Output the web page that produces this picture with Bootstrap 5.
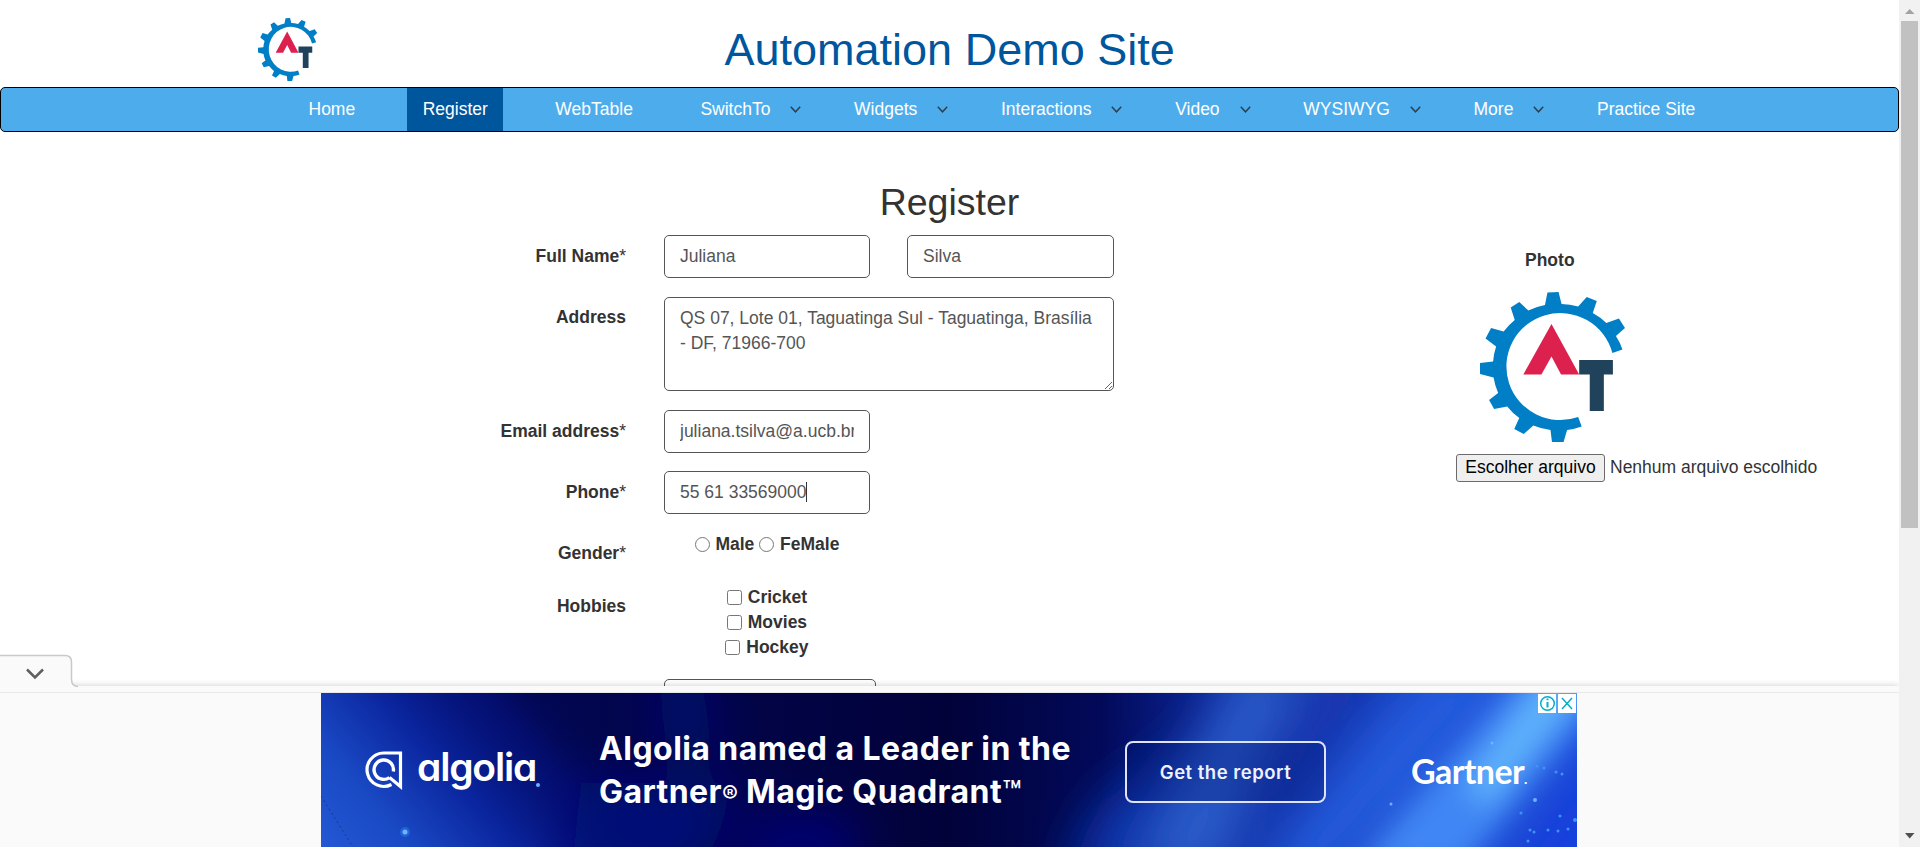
<!DOCTYPE html>
<html lang="en">
<head>
<meta charset="utf-8">
<title>Register</title>
<link rel="stylesheet" href="https://cdn.jsdelivr.net/npm/bootstrap@5.3.0/dist/css/bootstrap.min.css">
<style>
html, body { height: 100%; overflow: hidden; }
body { font: 17.5px/25px "Liberation Sans", Arial, sans-serif; color: #333; }
.page-view { height: 847px; position: relative; }
.page-body { width: 1899px; }
.site-head { height: 87px; padding-left: 257.500px; }
.site-head svg { width: 60px; height: 63px; margin-top: 18px; }
.site-title { font-size: 45px; line-height: 49px; color: #00569d; margin: 25px 0 0 407px; font-weight: 400; }
.main-nav { height: 45px; border: 1px solid #000; border-radius: 5px; background: #4dadec; padding: 0 0 0 292px; }
.main-nav .nav-link { height: 43px; padding: 9px 15.5px 8px; color: #fff; line-height: 25px; }
.main-nav .nav-link.active { background: #00569d; }
.main-nav .nav-item { margin-right: 36.5px; }
.main-nav .drop-item { margin-right: 37.2px; display: flex; }
.main-nav .drop-item .nav-link { padding-right: 0; }
.drop-item svg { width: 11px; height: 7px; margin: 18px 0 0 20px; }
.reg-title { font-size: 37.5px; line-height: 42px; margin: 48.5px 0 12px; font-weight: 400; text-align: center; }
.reg-form { width: 1114px; }
.form-line { display: flex; }
.form-line > label { width: 626px; text-align: right; font-weight: 700; padding-top: 9px; margin-right: 38px; flex: none; }
.form-line > .area-label { padding-top: 8px; }
.form-line .form-control { font-size: 17.5px; line-height: 25px; color: #555; border: 1px solid #555; border-radius: 5px; padding: 8px 15px; height: 43px; width: 206px; box-shadow: none; }
.form-line textarea.form-control { width: 450px; height: 94px; resize: both; }
.option-box { width: 206px; text-align: center; font-weight: 700; }
.option-box input { width: 15px; height: 15px; margin: 0; vertical-align: -2px; }
.option-box .choice-text { margin-left: 1px; }
.star { font-weight: 400; }
.photo-col { width: 443px; }
.file-btn { font-size: 17.5px; line-height: 24px; height: 28px; width: 149px; border: 1px solid #6b6b6b; border-radius: 3px; background: #efefef; color: #000; padding: 0 0 2px; }
.caret-line { left: 806px; top: 482px; width: 1px; height: 20px; background: #333; }
.scroll-rail { width: 21px; background: #f1f1f1; right: 0; top: 0; bottom: 0; }
.scroll-rail .thumb { width: 17px; height: 507px; background: #c1c1c1; margin: 0 0 0 2px; }
.ad-dock { left: 0; top: 686px; width: 1899px; height: 161px; background: #fafafa; box-shadow: 0 -1px 6px rgba(0,0,0,.16); }
.dock-strip { height: 7px; border-bottom: 1px solid #e9e9e9; position: relative; background: #fafafa; }
.dock-tab { left: 0; top: -32px; }
.ad-banner { width: 1256px; height: 154px; margin-left: 321px; background: #020a55; color: #fff; position: relative; overflow: hidden; }
.ad-banner .backdrop { left: 0; top: 0; }
.ad-text { font-family: Inter, "Open Sans", sans-serif; }
.wordmark { font-size: 39px; line-height: 40px; font-weight: 600; letter-spacing: -1.2px; font-feature-settings: "cv11"; }
.ad-headline { font-size: 32px; line-height: 43px; font-weight: 700; letter-spacing: .43px; }
.ad-headline small { font-weight: 500; letter-spacing: 0; line-height: 1; }
.ad-headline .reg-sign { font-size: 24px; }
.ad-headline .tm-sign { font-size: 31px; }
.ad-cta { width: 201px; height: 62px; border: 2px solid #dfe4fb; border-radius: 8px; font-size: 18.5px; font-weight: 600; letter-spacing: .5px; color: #eef1ff; background: rgba(0,20,110,.3); }
.partner { font-family: Lato, sans-serif; font-weight: 700; font-size: 34px; letter-spacing: -.6px; line-height: 40px; }
.ad-choices { right: 1px; top: 0; }
</style>
</head>
<body>
<svg width="0" height="0" class="position-absolute">
  <symbol id="gear-logo" viewBox="0 0 146 150" preserveAspectRatio="none">
    <path d="M137.500 57.500A63 63 0 0 0 131 44L140 36 134 26.500 121.500 31A63 63 0 0 0 108 21L112 9 102 5 93.500 14.500A63 63 0 0 0 77 12L74 0 63 0.500 60.500 13A63 63 0 0 0 44 18.500L35 10 26.500 15.500 30.500 28A63 63 0 0 0 19.500 39.500L7 36 1.500 46.500 12 54.500A63 63 0 0 0 9 69.500L-4 71 -4 82 9.500 85.500A63 63 0 0 0 14 101L5 108 10 117 23 114.500A63 63 0 0 0 35 126L30 137 39.500 142 49 133.500A63 63 0 0 0 66 138L67.500 150 79 150 82.500 138A63 63 0 0 0 97 134.500L93.500 125A53.500 53.500 0 1 1 127.500 61Z" transform="translate(4 0)" fill="#007fc7"/>
    <path d="M71 32 98.500 82.500H80.500L71 64.500 61 82.500H43Z" fill="#dd214f"/>
    <path d="M98.500 68H132V82.500H123V119H109V82.500H98.500Z" fill="#20425b"/>
  </symbol>
  <symbol id="chev" viewBox="0 0 11 7"><path d="M.8.8 5.500 5.800 10.200.8" fill="none" stroke="#2c3f4c" stroke-width="1.500"/></symbol>
</svg>
<div class="page-view overflow-hidden">
  <div class="page-body">
    <header class="site-head d-flex">
      <svg><use href="#gear-logo"/></svg>
      <h1 class="site-title">Automation Demo Site</h1>
    </header>
    <nav class="main-nav">
      <ul class="nav flex-nowrap">
        <li class="nav-item"><a class="nav-link">Home</a></li>
        <li class="nav-item"><a class="nav-link active">Register</a></li>
        <li class="nav-item"><a class="nav-link">WebTable</a></li>
        <li class="nav-item drop-item"><a class="nav-link">SwitchTo</a><svg><use href="#chev"/></svg></li>
        <li class="nav-item drop-item"><a class="nav-link">Widgets</a><svg><use href="#chev"/></svg></li>
        <li class="nav-item drop-item"><a class="nav-link">Interactions</a><svg><use href="#chev"/></svg></li>
        <li class="nav-item drop-item"><a class="nav-link">Video</a><svg><use href="#chev"/></svg></li>
        <li class="nav-item drop-item"><a class="nav-link">WYSIWYG</a><svg><use href="#chev"/></svg></li>
        <li class="nav-item drop-item"><a class="nav-link">More</a><svg><use href="#chev"/></svg></li>
        <li class="nav-item"><a class="nav-link text-nowrap">Practice Site</a></li>
      </ul>
    </nav>
    <h2 class="reg-title">Register</h2>
    <div class="d-flex">
      <form class="reg-form">
        <div class="form-line" style="height:62px"><label>Full Name<span class="star">*</span></label><input class="form-control" value="Juliana"><input class="form-control ms-auto" style="width:207px" value="Silva"></div>
        <div class="form-line" style="height:113px"><label class="area-label">Address</label><textarea class="form-control">QS 07, Lote 01, Taguatinga Sul - Taguatinga, Brasília - DF, 71966-700</textarea></div>
        <div class="form-line" style="height:61px"><label>Email address<span class="star">*</span></label><input class="form-control" value="juliana.tsilva@a.ucb.br"></div>
        <div class="form-line" style="height:61px"><label>Phone<span class="star">*</span></label><input class="form-control" value="55 61 33569000"></div>
        <div class="form-line" style="height:53px"><label>Gender<span class="star">*</span></label><div class="option-box"><input type="radio"> <span class="choice-text">Male</span> <input type="radio"> <span class="choice-text">FeMale</span></div></div>
        <div class="form-line" style="height:94px"><label>Hobbies</label><div class="option-box"><input type="checkbox"> <span class="choice-text">Cricket</span><br><input type="checkbox"> <span class="choice-text">Movies</span><br><input type="checkbox"> <span class="choice-text">Hockey</span></div></div>
        <div class="form-line"><label></label><div class="form-control" style="width:212px"></div></div>
      </form>
      <aside class="photo-col" style="margin-left:342px">
        <div class="fw-bold" style="margin:13px 0 19px 69px">Photo</div>
        <svg class="d-block" width="147" height="150" style="margin-left:23.500px"><use href="#gear-logo"/></svg>
        <div class="d-flex" style="margin-top:12px"><button class="file-btn text-nowrap">Escolher arquivo</button><span style="margin-left:5px;padding-top:1px">Nenhum arquivo escolhido</span></div>
      </aside>
    </div>
  </div>
  <span class="caret-line position-absolute"></span>
  <section class="ad-dock position-absolute">
    <div class="dock-strip">
      <svg class="dock-tab position-absolute" width="90" height="38"><path d="M0 1.500H65Q71.500 1.500 71.500 8V25Q71.500 32.500 78 32.500V38H0Z" fill="#fafafa"/><path d="M0 1.500H65Q71.500 1.500 71.500 8V25Q71.500 32.500 78 32.500" fill="none" stroke="#c9c9c9" stroke-width="1.500"/><path d="M27 15.500 35 23.500 43 15.500" fill="none" stroke="#5f5f5f" stroke-width="2.500"/></svg>
    </div>
    <div class="ad-banner d-flex ad-text">
      <svg class="backdrop position-absolute" width="1256" height="154">
        <defs>
          <linearGradient id="sky" x1="0" x2="1"><stop offset="0" stop-color="#03095a"/><stop offset=".3" stop-color="#01044a"/><stop offset=".5" stop-color="#01023a"/><stop offset=".62" stop-color="#020958"/><stop offset=".72" stop-color="#0d2a9e"/><stop offset=".85" stop-color="#1c49cc"/><stop offset="1" stop-color="#1a46d8"/></linearGradient>
          <linearGradient id="glow" gradientUnits="userSpaceOnUse" x1="-10" y1="150" x2="210" y2="-40"><stop offset="0" stop-color="#2459d6"/><stop offset=".25" stop-color="#1a49c4"/><stop offset=".52" stop-color="#0a259e"/><stop offset=".8" stop-color="#041280" stop-opacity=".6"/><stop offset="1" stop-color="#020850" stop-opacity="0"/></linearGradient>
          <filter id="haze" x="-80%" y="-80%" width="260%" height="260%"><feGaussianBlur stdDeviation="24"/></filter>
          <filter id="haze2" x="-50%" y="-50%" width="200%" height="200%"><feGaussianBlur stdDeviation="14"/></filter>
        </defs>
        <rect width="1256" height="154" fill="url(#sky)"/>
        <rect width="400" height="154" fill="url(#glow)"/>
        <g filter="url(#haze)">
          <path d="M335-20 345 60 395 60 380-20Z" fill="#020a72"/>
          <path d="M260 90 420 90 380 180H250Z" fill="#020a78"/>
          <path d="M430 120 420 190H540L530 120Z" fill="#020672"/>
          <path d="M780 110 880 40 870 190H740Z" fill="#0e34ac"/>
          <path d="M920-30H980L900 190H810Z" fill="#2a5cca"/>
          <path d="M1010-30H1090L950 100 920 80Z" fill="#1432ac"/>
          <path d="M1130-30H1200L1000 190H930Z" fill="#2760e0"/>
        </g>
        <g filter="url(#haze2)">
          <path d="M1200-20H1280V10L1140 180H1030Z" fill="#3f86f4"/>
          <path d="M1225-20H1275L1165 115 1145 90Z" fill="#5fb2fc"/>
          <path d="M1280 60 1190 180H1280Z" fill="#173fdc"/>
        </g>
        <path d="M0 103 32 154" stroke="#0a2670" stroke-width="1" stroke-dasharray="2 3" opacity=".6"/>
        <circle cx="84" cy="139" r="5" fill="#2b7bf0" opacity=".5"/>
        <g fill="#6ab5ff"><circle cx="84" cy="139" r="2.500"/><circle cx="217" cy="92" r="2"/><circle cx="1171" cy="50" r="1.500"/><circle cx="1070" cy="111" r="1.500"/><circle cx="1214" cy="107" r="2"/></g>
        <g fill="#3f93f5"><circle cx="1216" cy="73" r="1.500"/><circle cx="1223" cy="75" r="1.500"/><circle cx="1235" cy="79" r="1.500"/><circle cx="1241" cy="81" r="1.500"/><circle cx="1200" cy="120" r="1.500"/><circle cx="1239" cy="123" r="1.500"/><circle cx="1254" cy="127" r="2"/><circle cx="1209" cy="137" r="1.500"/><circle cx="1213" cy="139" r="1.500"/><circle cx="1227" cy="137" r="1.500"/><circle cx="1237" cy="138" r="1.500"/><circle cx="1247" cy="136" r="1.500"/><circle cx="1207" cy="148" r="1.500"/></g>
      </svg>
      <div class="d-flex position-relative" style="margin-left:44px;width:234px;padding-top:57px">
        <svg width="38" height="42" viewBox="0 0 38 42" fill="none" stroke="#fff"><path d="M24.500 27.500 35.500 36.500V3H19A16.700 16.700 0 1 0 26.500 34.500" stroke-width="3.200"/><path d="M24.500 27.500A9.700 9.700 0 1 1 28.300 21.500" stroke-width="3.400"/></svg>
        <span class="wordmark" style="margin:-3px 0 0 14px">algolia</span>
      </div>
      <div class="ad-headline position-relative text-nowrap" style="padding-top:34px;width:526px">Algolia named a Leader in the<br>Gartner<small class="reg-sign">®</small> Magic Quadrant<small class="tm-sign">™</small></div>
      <button class="ad-cta position-relative ad-text p-0" style="margin-top:48px">Get the report</button>
      <span class="partner position-relative" style="margin:58px 0 0 85px">Gartner<span style="font-size:14px">.</span></span>
      <svg class="ad-choices position-absolute" width="38" height="20" fill="none" stroke="#00aecd" stroke-width="1.500"><path d="M0 1H18V20H0ZM20 1H38V20H20Z" fill="#fff" stroke="none"/><circle cx="9.500" cy="10.500" r="6.800"/><path d="M9.500 9V14.500M9.500 5.500V7.300" stroke-width="2"/><path d="M24 5 34 16M34 5 24 16"/></svg>
    </div>
  </section>
  <div class="scroll-rail position-absolute d-flex flex-column">
    <svg width="21" height="21"><path d="M6 14H15.500L10.700 9Z" fill="#a3a3a3"/></svg>
    <div class="thumb"></div>
    <svg class="mt-auto" width="21" height="21"><path d="M6 7H15.500L10.700 12.500Z" fill="#505050"/></svg>
  </div>
</div>
<script src="https://cdn.jsdelivr.net/npm/bootstrap@5.3.0/dist/js/bootstrap.bundle.min.js"></script>
</body>
</html>
